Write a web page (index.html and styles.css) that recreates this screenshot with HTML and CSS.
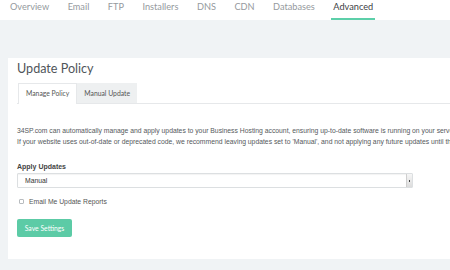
FILE: index.html
```html
<!DOCTYPE html>
<html lang="en">
  <head>
    <meta charset="UTF-8" />
    <meta name="viewport" content="width=device-width, initial-scale=1.0" />
    <link rel="stylesheet" href="styles.css">
  </head>
  <body>
    <nav class="topnav">
      <a href="#">Overview</a>
      <a href="#">Email</a>
      <a href="#">FTP</a>
      <a href="#">Installers</a>
      <a href="#">DNS</a>
      <a href="#">CDN</a>
      <a href="#">Databases</a>
      <a href="#" class="active">Advanced</a>
    </nav>

    <main class="page">
      <section class="card">
        <h1 class="title">Update Policy</h1>

        <div class="tabs">
          <span class="tab active">Manage Policy</span>
          <span class="tab">Manual Update</span>
        </div>

        <p class="intro">34SP.com can automatically manage and apply updates to your Business Hosting account, ensuring up-to-date software is running on your server at all times.</p>
        <p class="intro">If your website uses out-of-date or deprecated code, we recommend leaving updates set to 'Manual', and not applying any future updates until the code has been updated.</p>

        <form class="settings">
          <label class="field-label">Apply Updates</label>
          <div class="select-wrap">
            <select class="select">
              <option>Manual</option>
              <option>Automatic</option>
            </select>
          </div>

          <label class="check">
            <input type="checkbox" />
            <span>Email Me Update Reports</span>
          </label>

          <button type="button" class="save">Save Settings</button>
        </form>
      </section>
    </main>
  </body>
</html>
```

FILE: styles.css
```css
body {
  margin: 0;
  width: 450px;
  height: 270px;
  overflow: hidden;
  background-color: #f0f3f5;
  font-family: "Liberation Sans", Arial, sans-serif;
  color: #333;
}

.topnav {
  display: flex;
  gap: 18.5px;
  height: 20px;
  padding-left: 10px;
  background-color: #fff;
}

.topnav a {
  height: 18px;
  line-height: 14px;
  font-family: Lato, sans-serif;
  font-size: 9.2px;
  color: #959a9e;
  text-decoration: none;
  border-bottom: 2px solid transparent;
}

.topnav a.active {
  color: #3c4145;
  border-bottom-color: #5ccfa9;
  padding: 0 2px;
  margin-left: -2px;
}

.page {
  padding: 38px 0 0 8px;
}

.card {
  width: 600px;
  height: 199px;
  padding: 2px 9px 0;
  background-color: #fff;
}

.title {
  margin: 0;
  font-family: Lato, sans-serif;
  font-size: 12.6px;
  font-weight: 400;
  line-height: 18px;
  color: #50555a;
}

.tabs {
  display: flex;
  margin-top: 5px;
  padding-left: 1px;
  border-bottom: 1px solid #e6e8ea;
}

.tab {
  height: 19px;
  line-height: 19px;
  padding: 0 7px;
  font-family: Lato, sans-serif;
  font-size: 6.8px;
  color: #555;
  border: 1px solid transparent;
  border-bottom: none;
}

.tab.active {
  border-color: #e6e8ea;
  background-color: #fff;
  margin-bottom: -1px;
  height: 20px;
}

.tab:not(.active) {
  background-color: #eef0f1;
  padding: 0 6px;
}

.intro {
  margin: 0;
  font-size: 6.8px;
  line-height: 11px;
  color: #55595c;
  white-space: nowrap;
}

.tabs + .intro {
  margin-top: 21px;
}

.settings {
  display: flex;
  flex-direction: column;
  align-items: flex-start;
  margin-top: 15px;
}

.field-label {
  font-size: 7px;
  font-weight: 700;
  line-height: 10px;
  color: #444;
}

.select-wrap {
  position: relative;
  margin-top: 1px;
}

.select {
  display: block;
  appearance: none;
  width: 396px;
  height: 15px;
  padding: 0 0 0 7px;
  font-family: "Liberation Sans", Arial, sans-serif;
  font-size: 6.8px;
  color: #333;
  background-color: #fff;
  border: 1px solid #dcdfe1;
  border-radius: 1px;
  box-shadow: inset 0 1px 1px rgba(0, 0, 0, 0.05);
}

.select-wrap::after {
  content: "";
  position: absolute;
  top: 1px;
  right: 1px;
  width: 5px;
  height: 13px;
  background: linear-gradient(#f6f6f6, #dcdcdc);
  border-left: 1px solid #cfcfcf;
}

.select-wrap::before {
  content: "";
  position: absolute;
  top: 7px;
  right: 3px;
  width: 1.5px;
  height: 1.5px;
  background-color: #444;
  z-index: 1;
}

.check {
  display: flex;
  align-items: center;
  gap: 5px;
  margin-top: 10px;
  margin-left: 2px;
  font-size: 6.8px;
  color: #555;
}

.check input {
  appearance: none;
  width: 5px;
  height: 5px;
  margin: 0;
  border: 1px solid #b8bcbf;
  border-radius: 1px;
  background-color: #fff;
}

.save {
  margin-top: 14px;
  width: 55px;
  height: 18px;
  padding: 0;
  font-family: Lato, sans-serif;
  font-size: 6.8px;
  color: #fff;
  background-color: #5ccba6;
  border: none;
  border-radius: 2px;
  cursor: pointer;
}
```
